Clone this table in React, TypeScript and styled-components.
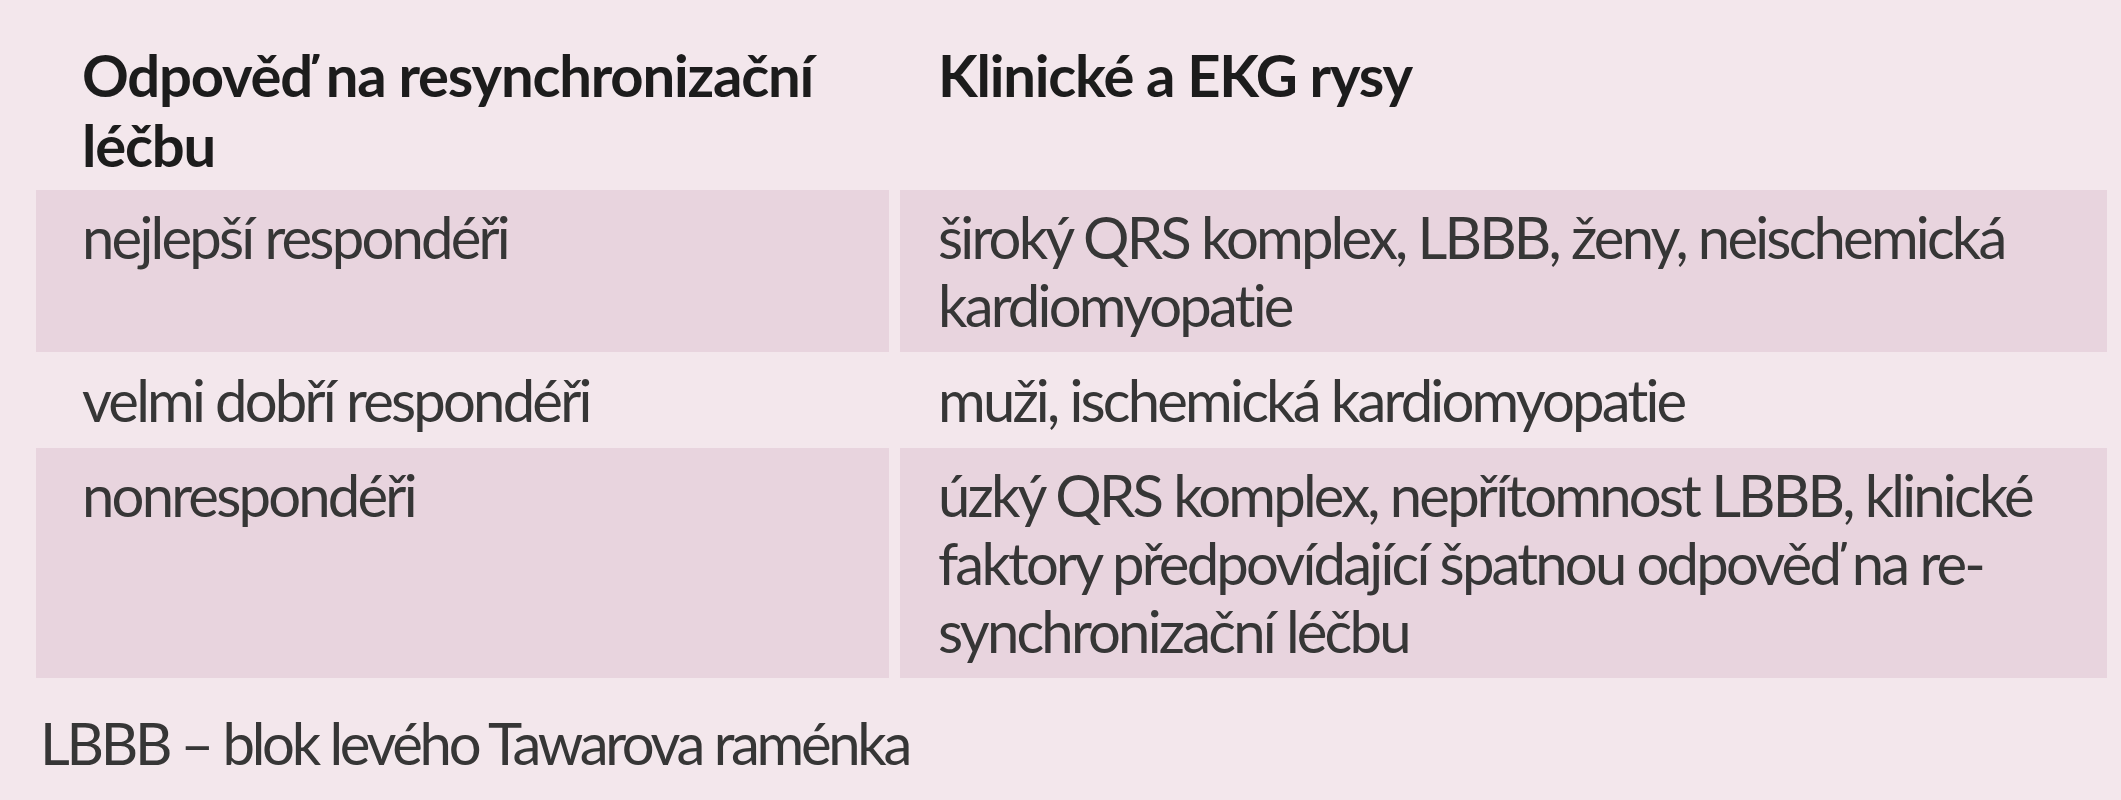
import React from "react";
import styled, { createGlobalStyle } from "styled-components";

const BG = "#f3e7ec";
const SHADE = "#e8d4de";
const TEXT = "#363636";
const HEAD = "#1c1c1c";

const Global = createGlobalStyle`
  body {
    margin: 0;
    background: ${BG};
    font-family: Lato, "Open Sans", sans-serif;
  }
`;

type Row = { left: string[]; right: string[] };

const rows: Row[] = [
  {
    left: ["nejlepší respondéři"],
    right: ["široký QRS komplex, LBBB, ženy, neischemická", "kardiomyopatie"],
  },
  {
    left: ["velmi dobří respondéři"],
    right: ["muži, ischemická kardiomyopatie"],
  },
  {
    left: ["nonrespondéři"],
    right: [
      "úzký QRS komplex, nepřítomnost LBBB, klinické",
      "faktory předpovídající špatnou odpověď na re-",
      "synchronizační léčbu",
    ],
  },
];

// the source breaks lines by hand, so keep its breaks
const Lines: React.FC<{ lines: string[] }> = ({ lines }) => (
  <>
    {lines.map((l, i) => (
      <React.Fragment key={i}>
        {i > 0 && <br />}
        {l}
      </React.Fragment>
    ))}
  </>
);

export default function App() {
  return (
    <Page>
      <Global />
      <Table>
        <HeadCell $col="left">
          <Lines lines={["Odpověď na resynchronizační", "léčbu"]} />
        </HeadCell>
        <HeadCell $col="right">Klinické a EKG rysy</HeadCell>
        {rows.map((r, i) => (
          <React.Fragment key={i}>
            <Cell $col="left" $shaded={i % 2 === 0}>
              <Lines lines={r.left} />
            </Cell>
            <Cell $col="right" $shaded={i % 2 === 0}>
              <Lines lines={r.right} />
            </Cell>
          </React.Fragment>
        ))}
      </Table>
      <Note>LBBB – blok levého Tawarova raménka</Note>
    </Page>
  );
}

const Page = styled.div`
  padding: 0 14px 0 36px;
  font-size: 58px;
  letter-spacing: -2.8px;
`;

const Table = styled.div`
  display: grid;
  grid-template-columns: 853px 1207px;
  column-gap: 11px;
  row-gap: 1px;
`;

const HeadCell = styled.div<{ $col: "left" | "right" }>`
  padding: 40px 0 9px ${(p) => (p.$col === "left" ? "46px" : "38px")};
  font-weight: 700;
  line-height: 70px;
  letter-spacing: -1.2px;
  color: ${HEAD};
`;

const Cell = styled.div<{ $col: "left" | "right"; $shaded: boolean }>`
  padding: 13px 0 13px ${(p) => (p.$col === "left" ? "46px" : "38px")};
  line-height: 68px;
  color: ${TEXT};
  background: ${(p) => (p.$shaded ? SHADE : "transparent")};
`;

const Note = styled.p`
  margin: 31px 0 0 4px;
  line-height: 68px;
  letter-spacing: -3.3px;
  color: ${TEXT};
`;
